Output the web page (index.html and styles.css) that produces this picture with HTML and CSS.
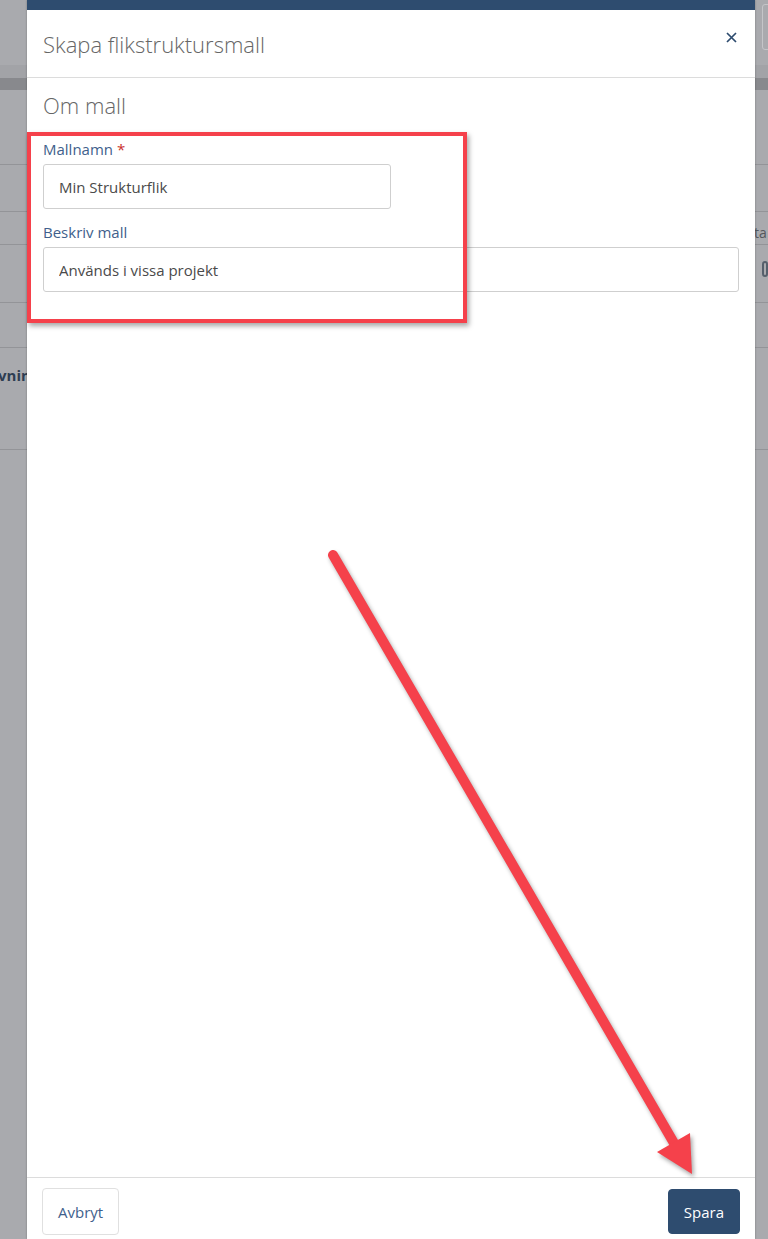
FILE: index.html
```html
<!DOCTYPE html>
<html lang="sv">
<head>
    <meta charset="UTF-8">
    <meta name="viewport" content="width=device-width, initial-scale=1.0">
    <title>Skapa flikstruktursmall</title>
    <link rel="stylesheet" href="styles.css">
</head>
<body>
    <!-- page behind the dimmed overlay -->
    <div class="backdrop">
        <div class="bg-header"><span class="bg-search"></span></div>
        <div class="bg-band light"></div>
        <div class="bg-band dark"></div>
        <div class="bg-row h75"></div>
        <div class="bg-row h47"></div>
        <div class="bg-row h33"><span class="bg-right-text">ta</span></div>
        <div class="bg-row h58"><span class="bg-icon"></span></div>
        <div class="bg-row h45"></div>
        <div class="bg-row h102"><span class="bg-left-text">Beskrivning</span></div>
        <div class="bg-row rest"></div>
    </div>

    <div class="modal">
        <div class="modal-top"></div>
        <div class="modal-header">
            <h2>Skapa flikstruktursmall</h2>
            <button class="close" type="button" aria-label="Stäng">
                <svg width="11" height="11" viewBox="0 0 11 11"><path d="M1 1L10 10M10 1L1 10" stroke="#2d4b6e" stroke-width="1.7" fill="none"/></svg>
            </button>
        </div>
        <div class="modal-body">
            <h3>Om mall</h3>
            <div class="field">
                <label for="name">Mallnamn <span class="req">*</span></label>
                <input type="text" id="name" class="short" value="Min Strukturflik">
            </div>
            <div class="field">
                <label for="desc">Beskriv mall</label>
                <input type="text" id="desc" value="Används i vissa projekt">
            </div>
        </div>
        <div class="modal-footer">
            <button type="button" class="btn">Avbryt</button>
            <button type="submit" class="btn primary">Spara</button>
        </div>
    </div>

    <!-- annotations drawn on top of the screenshot -->
    <div class="highlight"></div>
    <svg class="arrow" width="768" height="1239" viewBox="0 0 768 1239">
        <line x1="333" y1="555" x2="678" y2="1150" stroke="#f5414b" stroke-width="10" stroke-linecap="round"/>
        <polygon points="657,1152 690,1133 692,1174" fill="#f5414b"/>
    </svg>
</body>
</html>
```

FILE: styles.css
```css
* {
    box-sizing: border-box;
}
body {
    margin: 0;
    width: 768px;
    height: 1239px;
    overflow: hidden;
    position: relative;
    background-color: #a9aaae;
    font-family: "Open Sans", Arial, sans-serif;
}

/* background page */
.backdrop {
    display: flex;
    flex-direction: column;
    height: 1239px;
}
.bg-header {
    height: 65px;
    position: relative;
}
.bg-search {
    position: absolute;
    left: 762px;
    top: 4px;
    width: 40px;
    height: 46px;
    border: 1px solid #c4c5c8;
    border-radius: 3px;
}
.bg-band {
    height: 13px;
}
.bg-band.light {
    background-color: #a2a3a7;
}
.bg-band.dark {
    height: 12px;
    background-color: #88898d;
}
.bg-row {
    border-bottom: 1px solid #939498;
    display: flex;
    align-items: center;
}
.h75 { height: 75px; }
.h47 { height: 47px; }
.h33 { height: 33px; }
.h58 { height: 58px; }
.h45 { height: 45px; }
.h102 { height: 102px; align-items: flex-start; padding-top: 17px; }
.rest { flex: 1; border-bottom: none; }
.bg-right-text {
    margin-left: 754px;
    margin-top: 8px;
    font-size: 14px;
    color: #55575c;
}
.bg-icon {
    margin-left: 762px;
    margin-top: -10px;
    width: 14px;
    height: 16px;
    border: 2px solid #56606c;
    border-radius: 3px;
}
.bg-left-text {
    margin-left: -49px;
    font-size: 15px;
    font-weight: 700;
    color: #2e3d52;
}

/* modal */
.modal {
    position: absolute;
    left: 27px;
    top: 0;
    width: 728px;
    height: 1239px;
    background-color: #fff;
    display: flex;
    flex-direction: column;
    box-shadow: 0 0 2px rgba(0, 0, 0, 0.3);
}
.modal-top {
    height: 10px;
    background-color: #2e4c6f;
}
.modal-header {
    height: 68px;
    padding: 0 16px;
    display: flex;
    align-items: center;
    justify-content: space-between;
    border-bottom: 1px solid #dcdcdc;
}
.modal-header h2 {
    margin: 0;
    font-size: 22px;
    font-weight: 300;
    color: #666;
}
.close {
    border: none;
    background: none;
    padding: 0;
    margin: 0 2px 12px 0;
    cursor: pointer;
    display: flex;
}
.modal-body {
    flex: 1;
    padding: 12px 16px;
}
.modal-body h3 {
    margin: 0 0 19px;
    font-size: 22px;
    font-weight: 300;
    color: #666;
    line-height: 30px;
}
.field {
    margin-bottom: 13px;
}
.field label {
    display: block;
    font-size: 15px;
    line-height: 20px;
    color: #3f5f8c;
    margin-bottom: 5px;
}
.req {
    color: #c9302c;
}
.field input {
    display: block;
    width: 100%;
    height: 45px;
    padding: 0 15px;
    border: 1px solid #cfcfcf;
    border-radius: 3px;
    font-family: "Open Sans", Arial, sans-serif;
    font-size: 15px;
    color: #4a4a4a;
}
.field input.short {
    width: 348px;
}
.modal-footer {
    height: 62px;
    border-top: 1px solid #dcdcdc;
    padding: 10px 15px 0;
    display: flex;
    justify-content: space-between;
    align-items: flex-start;
}
.btn {
    height: 47px;
    padding: 0 15px;
    border: 1px solid #e0e0e0;
    border-radius: 4px;
    background-color: #fff;
    font-family: "Open Sans", Arial, sans-serif;
    font-size: 15px;
    color: #3f5f8c;
    cursor: pointer;
}
.btn.primary {
    height: 45px;
    margin-top: 1px;
    padding: 0 15px;
    border-color: #2e4c6f;
    background-color: #2e4c6f;
    color: #fff;
}

/* annotations */
.highlight {
    position: absolute;
    left: 27px;
    top: 132px;
    width: 440px;
    height: 191px;
    border: 4px solid #f5414b;
    box-shadow: 2px 3px 5px rgba(0, 0, 0, 0.35);
}
.arrow {
    position: absolute;
    left: 0;
    top: 0;
    pointer-events: none;
    filter: drop-shadow(2px 3px 2px rgba(0, 0, 0, 0.35));
}
```
